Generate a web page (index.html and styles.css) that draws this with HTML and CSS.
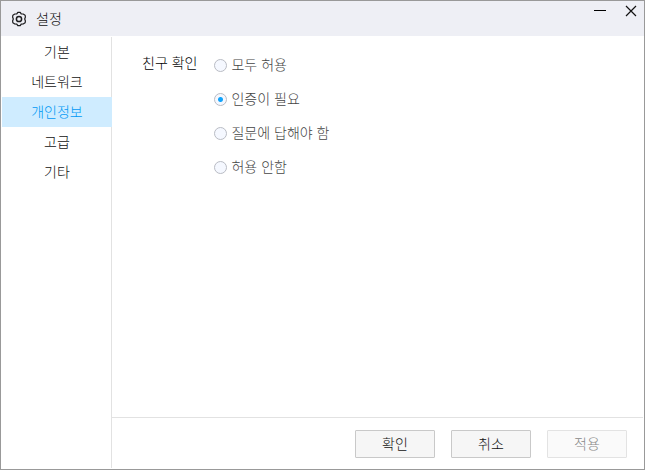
FILE: index.html
```html
<!DOCTYPE html>
<html lang="ko">
<head>
  <meta charset="UTF-8" />
  <meta name="viewport" content="width=device-width, initial-scale=1.0"/>
  <title>설정</title>
  <link rel="stylesheet" href="styles.css">
</head>
<body>
  <div class="window">
    <header class="titlebar">
      <svg class="gear" width="16" height="16" viewBox="0 0 16 16" fill="none" stroke="#1c1c1e" stroke-width="1.2" stroke-linejoin="round">
        <path d="M6.8 1.4 H9.2 L10.2 2.9 L12.2 3 L14.1 4.2 L14.4 6 L13.7 8 L14.4 10 L14.1 11.8 L12.2 13 L10.2 13.1 L9.2 14.6 H6.8 L5.8 13.1 L3.8 13 L1.9 11.8 L1.6 10 L2.3 8 L1.6 6 L1.9 4.2 L3.8 3 L5.8 2.9 Z"/>
        <circle cx="8" cy="8" r="2.6" stroke-width="1.5"/>
      </svg>
      <h1 class="title">설정</h1>
      <div class="window-controls">
        <button class="control" type="button" aria-label="최소화">
          <svg width="12" height="12" viewBox="0 0 12 12"><path d="M0 5.5H12" stroke="#000"/></svg>
        </button>
        <button class="control" type="button" aria-label="닫기">
          <svg width="12" height="12" viewBox="0 0 12 12"><path d="M1 1L11 11M11 1L1 11" stroke="#111" stroke-width="1.2"/></svg>
        </button>
      </div>
    </header>
    <div class="content">
      <nav class="sidebar">
        <a class="nav-item" href="#basic">기본</a>
        <a class="nav-item" href="#network">네트워크</a>
        <a class="nav-item active" href="#privacy">개인정보</a>
        <a class="nav-item" href="#advanced">고급</a>
        <a class="nav-item" href="#etc">기타</a>
      </nav>
      <form class="main">
        <div class="panel" role="radiogroup" aria-labelledby="friend-label">
          <div class="panel-label" id="friend-label">친구 확인</div>
          <div class="options">
            <label class="option"><input type="radio" name="friend">모두 허용</label>
            <label class="option"><input type="radio" name="friend" checked>인증이 필요</label>
            <label class="option"><input type="radio" name="friend">질문에 답해야 함</label>
            <label class="option"><input type="radio" name="friend">허용 안함</label>
          </div>
        </div>
        <footer class="actions">
          <button class="btn" type="button">확인</button>
          <button class="btn" type="button">취소</button>
          <button class="btn" type="button" disabled>적용</button>
        </footer>
      </form>
    </div>
  </div>
</body>
</html>
```
FILE: styles.css
```css
* { box-sizing: border-box; }
body {
  margin: 0;
  font-family: "Noto Sans CJK KR", sans-serif;
  font-size: 14px;
  font-weight: 300;
  line-height: 20px;
  color: #111;
  background-color: white;
}
.window {
  display: flex;
  flex-direction: column;
  min-height: 100vh;
  border: 1px solid #999;
}
.titlebar {
  display: flex;
  align-items: center;
  height: 35px;
  padding-left: 10px;
  background-color: #eeeff5;
}
.gear { flex: none; }
.title {
  margin: 0 0 0 9px;
  padding-bottom: 2px;
  font-size: 14px;
  font-weight: 300;
}
.window-controls {
  display: flex;
  align-self: flex-start;
  gap: 7px;
  margin-left: auto;
  padding-right: 1px;
}
.control {
  display: flex;
  align-items: center;
  justify-content: center;
  width: 24px;
  height: 20px;
  padding: 0;
  border: none;
  background: none;
}
.content {
  display: flex;
  flex: 1;
  padding: 1px;
}
.sidebar {
  flex: none;
  width: 110px;
  border-right: 1px solid #e2e2e2;
}
.nav-item {
  display: block;
  padding: 4px 0 6px 1px;
  text-align: center;
  color: #111;
  text-decoration: none;
}
.nav-item.active {
  margin-right: -1px;
  padding-right: 1px;
  background-color: #cfecff;
  color: #0099f5;
}
.main {
  display: flex;
  flex: 1;
  flex-direction: column;
}
.panel {
  display: flex;
  flex: 1;
  gap: 17px;
  padding: 15px 30px;
}
.panel-label { color: #000; }
.options {
  display: flex;
  flex-direction: column;
  gap: 12px;
  padding-top: 2px;
}
.option {
  display: flex;
  align-items: center;
  gap: 4px;
  padding-bottom: 2px;
  color: #444;
}
.option input {
  appearance: none;
  width: 13px;
  height: 13px;
  margin: 2px 0 0;
  border: 1px solid #b9bcc4;
  border-radius: 50%;
  background-color: #f5f8ff;
}
.option input:checked {
  background-image: radial-gradient(circle, #12a3fa 2px, transparent 3px);
}
.actions {
  display: flex;
  justify-content: flex-end;
  gap: 16px;
  padding: 12px 16px 10px;
  border-top: 1px solid #e2e2e2;
}
.btn {
  width: 80px;
  height: 28px;
  padding: 0 0 2px;
  border: 1px solid #c9c9c9;
  border-radius: 1px;
  background-color: #f6f6f6;
  font: inherit;
  color: #111;
}
.btn:disabled {
  border-color: #e3e3e3;
  background-color: #fafafa;
  color: #888;
}
```
